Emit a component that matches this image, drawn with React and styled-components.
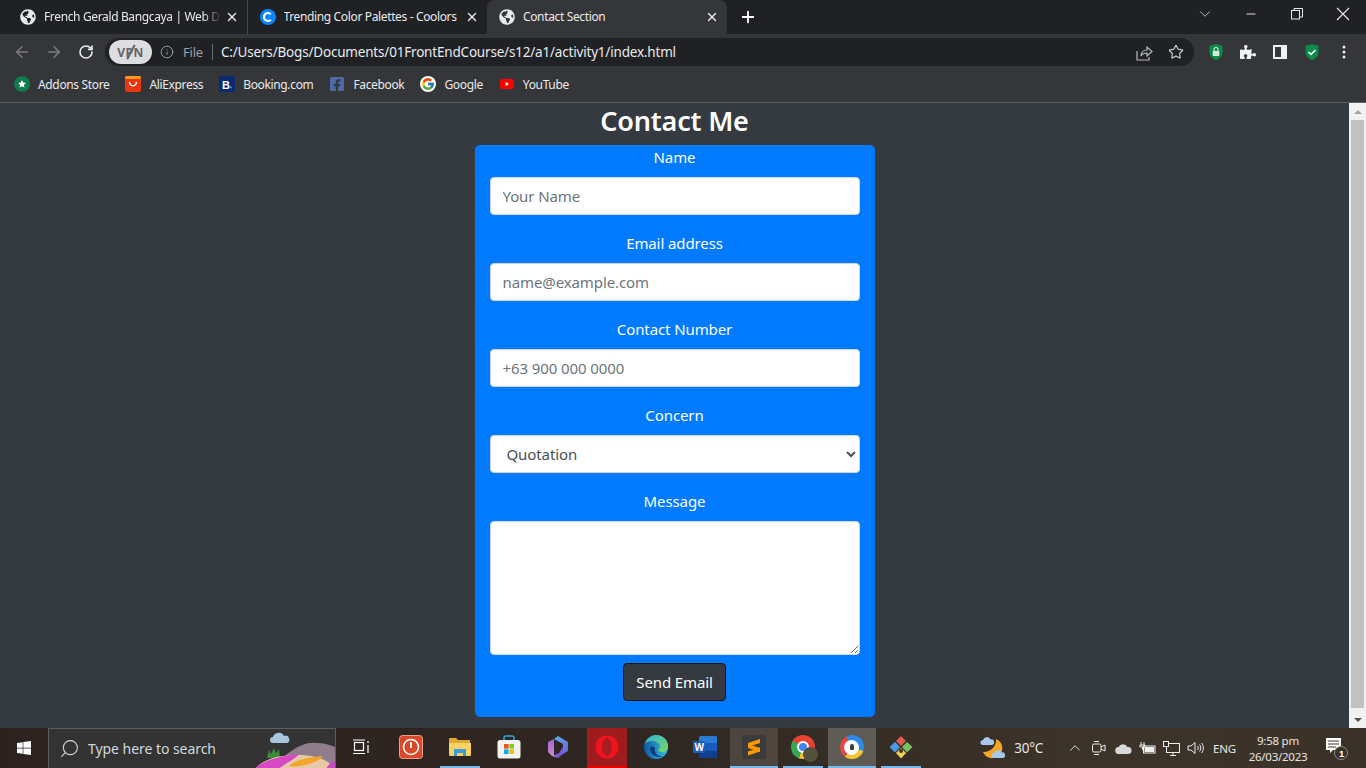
import React from "react";
import styled, { createGlobalStyle } from "styled-components";
import { FaGlobeAmericas, FaFacebookSquare, FaWindows, FaPuzzlePiece } from "react-icons/fa";
import { FcGoogle } from "react-icons/fc";
import {
  ArrowLeft,
  ArrowRight,
  RotateCw,
  Info,
  Star,
  X,
  Plus,
  ChevronDown,
  ChevronUp,
  Minus,
  Search,
} from "lucide-react";

const uiFont = `"Noto Sans", "Open Sans", "Liberation Sans", sans-serif`;

const GlobalStyle = createGlobalStyle`
  html, body {
    margin: 0;
    padding: 0;
    height: 100%;
    overflow: hidden;
    font-family: ${uiFont};
  }
  * {
    box-sizing: border-box;
  }
`;

const Screen = styled.div`
  width: 1366px;
  height: 768px;
  display: flex;
  flex-direction: column;
  background: #343a40;
`;

/* ---------- tabs ---------- */
const TabStrip = styled.div`
  height: 34px;
  flex: none;
  display: flex;
  align-items: flex-end;
  padding-left: 8px;
  background: #202124;
`;

const Tab = styled.div`
  position: relative;
  width: ${(p) => (p.$active ? "240px" : "239.5px")};
  height: 34px;
  flex: none;
  display: flex;
  align-items: center;
  padding: 0 8px 0 12px;
  gap: 8px;
  color: #e8eaed;
  background: ${(p) => (p.$active ? "#35363a" : "transparent")};
  border-radius: ${(p) => (p.$active ? "8px 8px 0 0" : "0")};
  border-right: ${(p) => (p.$divider ? "1px solid #4a4b4f" : "none")};
  background-clip: ${(p) => (p.$divider ? "padding-box" : "border-box")};
`;

const TabTitle = styled.span`
  flex: 1;
  min-width: 0;
  overflow: hidden;
  white-space: nowrap;
  font-size: 12px;
  letter-spacing: -0.36px;
  padding-bottom: 1px;
  mask-image: ${(p) => (p.$fade ? "linear-gradient(90deg, #000 90%, transparent)" : "none")};
`;

const TabClose = styled(X)`
  flex: none;
  width: 14px;
  height: 14px;
  margin-left: -4px;
  stroke-width: 2.4;
  color: #e8eaed;
`;

const NewTab = styled(Plus)`
  width: 18px;
  height: 18px;
  margin: 0 0 8px 12px;
  stroke-width: 2.4;
  color: #fff;
`;

const WindowButtons = styled.div`
  margin-left: auto;
  height: 28px;
  align-self: flex-start;
  display: flex;
`;

const WindowButton = styled.div`
  width: 46px;
  height: 28px;
  display: flex;
  align-items: center;
  justify-content: center;
  color: #e8eaed;
`;

/* ---------- toolbar ---------- */
const Toolbar = styled.div`
  height: 34px;
  flex: none;
  display: flex;
  align-items: center;
  padding: 2px 6px 0 6px;
  background: #35363a;
`;

const NavButton = styled.div`
  width: 32px;
  height: 28px;
  flex: none;
  display: flex;
  align-items: center;
  justify-content: center;
  color: ${(p) => (p.$dim ? "#7b7d81" : "#e8eaed")};
`;

const AddressBar = styled.div`
  width: 1089px;
  height: 28px;
  flex: none;
  margin-left: 3px;
  display: flex;
  align-items: center;
  padding: 0 2px 0 4px;
  border-radius: 14px;
  background: #202124;
`;

const VpnPill = styled.div`
  width: 43px;
  height: 24px;
  flex: none;
  display: flex;
  align-items: center;
  justify-content: center;
  border-radius: 12px;
  background: #dcdde0;
  color: #63656a;
  font-size: 12px;
  font-weight: 700;
  letter-spacing: 0.5px;
  position: relative;
  &::after {
    content: "";
    position: absolute;
    left: 21px;
    top: 4px;
    width: 1.5px;
    height: 16px;
    background: #63656a;
    transform: rotate(28deg);
  }
`;

const SecurityInfo = styled.div`
  display: flex;
  align-items: center;
  margin-left: 8px;
  color: #9aa0a6;
  font-size: 13px;
  letter-spacing: -0.2px;
  gap: 9px;
`;

const Divider = styled.span`
  width: 1px;
  height: 16px;
  margin: 0 8px 0 0;
  background: #6a6b6f;
`;

const UrlText = styled.span`
  flex: 1;
  color: #e8eaed;
  font-size: 13.5px;
  letter-spacing: -0.19px;
  white-space: nowrap;
`;

const OmniIcon = styled.div`
  width: 32px;
  height: 24px;
  flex: none;
  display: flex;
  align-items: center;
  justify-content: center;
  color: #c4c7c5;
`;

const ExtensionGroup = styled.div`
  margin-left: 6px;
  display: flex;
`;

/* ---------- bookmarks ---------- */
const BookmarkBar = styled.div`
  height: 35px;
  flex: none;
  display: flex;
  align-items: center;
  padding: 0 0 2px 14px;
  gap: 16px;
  background: #35363a;
  border-bottom: 1px solid #5f6063;
`;

const Bookmark = styled.div`
  display: flex;
  align-items: center;
  gap: 8px;
  color: #e8eaed;
  font-size: 12px;
  letter-spacing: -0.35px;
  white-space: nowrap;
`;

const IconCircle = styled.span`
  width: 16px;
  height: 16px;
  flex: none;
  display: flex;
  align-items: center;
  justify-content: center;
  border-radius: 50%;
  background: #fff;
`;

/* ---------- page ---------- */
const Viewport = styled.div`
  flex: 1;
  min-height: 0;
  display: flex;
`;

const PageBody = styled.main`
  flex: 1;
  display: flex;
  flex-direction: column;
  align-items: center;
  background: #343a40;
  color: #fff;
`;

const Heading = styled.h2`
  margin: 0;
  height: 42px;
  font-size: 27px;
  line-height: 36px;
  font-weight: 600;
  letter-spacing: -0.2px;
`;

const ContactForm = styled.form`
  width: 400px;
  height: 572px;
  display: flex;
  flex-direction: column;
  align-items: center;
  padding: 0 15px 16px;
  border-radius: 5px;
  background: #007bff;
`;

const FieldLabel = styled.label`
  display: block;
  height: 24px;
  margin-bottom: 8px;
  font-size: 15px;
  line-height: 24px;
  letter-spacing: -0.1px;
  color: #fff;
  text-align: center;
`;

const fieldStyles = `
  display: block;
  width: 370px;
  border: 1px solid #ced4da;
  border-radius: 4px;
  background: #fff;
  color: #495057;
  font-family: ${uiFont};
  font-size: 15px;
  letter-spacing: -0.1px;
  outline: none;
`;

const TextField = styled.input`
  ${fieldStyles}
  height: 38px;
  margin-bottom: 16px;
  padding: 6px 12px;
  &::placeholder {
    color: #6c757d;
    opacity: 1;
  }
`;

const SelectField = styled.select`
  ${fieldStyles}
  height: 38px;
  margin-bottom: 16px;
  padding: 6px 8px 6px 12px;
`;

const MessageField = styled.textarea`
  ${fieldStyles}
  height: 134px;
  margin-bottom: 8px;
  padding: 6px 12px;
  resize: vertical;
`;

const SendButton = styled.button`
  width: 103px;
  height: 38px;
  padding: 0;
  border: 1px solid #111418;
  border-radius: 4px;
  background: #343a40;
  color: #fff;
  font-family: ${uiFont};
  font-size: 15px;
  letter-spacing: -0.12px;
`;

const Scrollbar = styled.div`
  width: 17px;
  flex: none;
  display: flex;
  flex-direction: column;
  background: #f1f1f1;
`;

const ScrollArrow = styled.div`
  height: 17px;
  flex: none;
  display: flex;
  align-items: center;
  justify-content: center;
  &::before {
    content: "";
    border-left: 4px solid transparent;
    border-right: 4px solid transparent;
    ${(p) => (p.$down ? "border-top: 4px solid #505050;" : "border-bottom: 4px solid #a3a3a3;")}
  }
`;

const ScrollThumb = styled.div`
  flex: 1;
  margin: 0 2px 3px;
  background: #c1c1c1;
`;

/* ---------- taskbar ---------- */
const Taskbar = styled.footer`
  height: 40px;
  flex: none;
  display: flex;
  align-items: stretch;
  color: #fff;
  background: linear-gradient(90deg, #2c2320 0%, #2f2622 45%, #3c3429 80%, #3a3229 100%);
`;

const StartButton = styled.div`
  width: 48px;
  flex: none;
  display: flex;
  align-items: center;
  justify-content: center;
  color: #fff;
`;

const SearchBox = styled.div`
  position: relative;
  width: 288px;
  flex: none;
  display: flex;
  align-items: center;
  gap: 8px;
  padding-left: 10px;
  overflow: hidden;
  background: #333;
  border: 1px solid #5e5e5e;
  border-bottom: none;
  color: #d0d8dc;
  font-size: 14px;
  letter-spacing: -0.05px;
`;

const SearchGlass = styled(Search)`
  width: 21px;
  height: 21px;
  stroke-width: 1.2;
  transform: scaleX(-1);
`;

const SearchArt = styled.svg`
  position: absolute;
  right: 0;
  top: 0;
  width: 82px;
  height: 40px;
`;

const TaskItems = styled.div`
  display: flex;
`;

const TaskCell = styled.div`
  width: ${(p) => p.$width || 49}px;
  flex: none;
  display: flex;
  justify-content: center;
`;

const TaskTile = styled.div`
  width: ${(p) => (p.$wide ? 48 : 40)}px;
  height: 40px;
  display: flex;
  align-items: center;
  justify-content: center;
  background: ${(p) => p.$bg || "transparent"};
  border-bottom: 2px solid ${(p) => p.$line || "transparent"};
`;

const ChromeBall = styled.div`
  position: relative;
  width: 24px;
  height: 24px;
  border-radius: 50%;
  background: conic-gradient(#ea4335 0 100deg, #fbc02d 100deg 200deg, #34a853 200deg 300deg, #ea4335 300deg);
  &::before {
    content: "";
    position: absolute;
    inset: 6px;
    border-radius: 50%;
    background: #4285f4;
    border: 2px solid #fff;
  }
  &::after {
    content: "";
    position: absolute;
    right: -3px;
    bottom: -3px;
    width: 15px;
    height: 15px;
    border-radius: 50%;
    background: #54513c;
  }
`;

const SecureBall = styled.div`
  width: 24px;
  height: 24px;
  border-radius: 50%;
  display: flex;
  align-items: center;
  justify-content: center;
  background: conic-gradient(#2f8be8 0 110deg, #f7c531 110deg 215deg, #e5483e 215deg 330deg, #2f8be8 330deg);
`;

const SecureCore = styled.div`
  width: 15px;
  height: 15px;
  border-radius: 50%;
  display: flex;
  align-items: center;
  justify-content: center;
  background: #fff;
  &::after {
    content: "";
    width: 4px;
    height: 6px;
    border-radius: 2px 2px 1px 1px;
    background: #3b3b3b;
  }
`;

const Tray = styled.div`
  margin-left: auto;
  display: flex;
  align-items: center;
  font-size: 12px;
  color: #e8e6e3;
`;

const Weather = styled.div`
  display: flex;
  align-items: center;
  gap: 8px;
  margin-right: 20px;
  font-size: 13.5px;
  letter-spacing: -0.2px;
`;

const TrayIcon = styled.div`
  width: 24px;
  height: 40px;
  flex: none;
  display: flex;
  align-items: center;
  justify-content: center;
  color: #eee;
`;

const Lang = styled.span`
  margin: 0 0 0 6px;
  font-size: 11.5px;
  letter-spacing: -0.2px;
`;

const Clock = styled.div`
  width: 60px;
  margin-left: 12px;
  padding-top: 2px;
  text-align: center;
  font-size: 11.5px;
  line-height: 16px;
  letter-spacing: -0.25px;
  white-space: nowrap;
`;

const NotifyBox = styled.div`
  width: 58px;
  display: flex;
  align-items: center;
  justify-content: center;
`;

/* ---------- drawn icons ---------- */
const CoolorsIcon = () => (
  <svg width="16" height="16" viewBox="0 0 16 16">
    <circle cx="8" cy="8" r="8" fill="#0a84ff" />
    <path d="M10.8 5.2a4 4 0 1 0 0 5.600" fill="none" stroke="#fff" strokeWidth="2.2" />
  </svg>
);

const RestoreIcon = () => (
  <svg width="12" height="12" viewBox="0 0 12 12" fill="none" stroke="currentColor">
    <rect x="0.5" y="2.5" width="8" height="8.5" />
    <path d="M3 2.5V.5h8.5V9H8.5" />
  </svg>
);

const CloseLine = () => (
  <svg width="14" height="14" viewBox="0 0 14 14" stroke="currentColor" strokeWidth="1.1">
    <path d="M1 1l12 12M13 1L1 13" />
  </svg>
);

const ShareIcon = () => (
  <svg width="17" height="17" viewBox="0 0 17 17" fill="none" stroke="#b8babd" strokeWidth="1.2">
    <path d="M1 7v9h12v-3" />
    <path d="M5 12c0-4 3-6 6-6V3l5 4.5-5 4.5V9c-3 0-5 1-6 3z" />
  </svg>
);

const ShieldLock = () => (
  <svg width="16" height="16" viewBox="0 0 16 16">
    <path d="M8 0l6.500 1.800V8c0 4-3 6.500-6.500 8-3.500-1.500-6.500-4-6.500-8V1.800z" fill="#0c8a4a" />
    <rect x="4.700" y="7" width="6.600" height="5" rx="1" fill="#d6e9dd" />
    <path d="M6 7V5.500a2 2 0 0 1 4 0V7" fill="none" stroke="#d6e9dd" strokeWidth="1.200" />
  </svg>
);

const ShieldCheck = () => (
  <svg width="16" height="16" viewBox="0 0 16 16">
    <path d="M8 0l6.500 1.800V8c0 4-3 6.500-6.500 8-3.500-1.500-6.500-4-6.500-8V1.800z" fill="#0c8a4a" />
    <path d="M4.500 8l2.500 2.300L11.500 6" fill="none" stroke="#fff" strokeWidth="1.600" />
  </svg>
);

const SidePanelIcon = () => (
  <svg width="14" height="14" viewBox="0 0 14 14">
    <rect width="14" height="14" fill="#f1f3f4" />
    <rect x="2" y="2" width="6" height="10" fill="#35363a" />
  </svg>
);

const MenuDots = () => (
  <svg width="4" height="14" viewBox="0 0 4 14" fill="#e8eaed">
    <circle cx="2" cy="2" r="1.500" />
    <circle cx="2" cy="7" r="1.500" />
    <circle cx="2" cy="12" r="1.500" />
  </svg>
);

const AddonsIcon = () => (
  <svg width="16" height="16" viewBox="0 0 16 16">
    <circle cx="8" cy="8" r="8" fill="#0e7c4a" />
    <path d="M8 4l1.200 2.600 2.800.3-2.100 1.900.6 2.800L8 10.200l-2.500 1.400.6-2.800L4 6.900l2.800-.3z" fill="#fff" />
  </svg>
);

const AliIcon = () => (
  <svg width="16" height="16" viewBox="0 0 16 16">
    <rect width="16" height="16" rx="2" fill="#e8360e" />
    <rect width="16" height="3" rx="1.500" fill="#f79a1e" />
    <path d="M4.500 6c.4 5 6.600 5 7 0" fill="none" stroke="#fff" strokeWidth="1.400" />
  </svg>
);

const BookingIcon = () => (
  <svg width="16" height="16" viewBox="0 0 16 16">
    <rect width="16" height="16" rx="2" fill="#0b2a6f" />
    <text x="3" y="12.500" fontSize="11" fontWeight="700" fill="#fff" fontFamily="Liberation Sans, sans-serif">B</text>
    <circle cx="12" cy="11.500" r="1" fill="#36a3e0" />
  </svg>
);

const YoutubeIcon = () => (
  <svg width="16" height="10" viewBox="0 0 16 10">
    <rect x="1" width="14" height="10" rx="2.500" fill="#f00" />
    <path d="M6.700 3l3.300 2-3.300 2z" fill="#fff" />
  </svg>
);

const TaskViewIcon = () => (
  <svg width="18" height="16" viewBox="0 0 18 16" fill="none" stroke="#fff" strokeWidth="1.200">
    <rect x="2.500" y="3.500" width="9" height="8" />
    <path d="M1 1h12M1 14.500h12M16 2v2M16 6v8" />
  </svg>
);

const PowerAppIcon = () => (
  <svg width="24" height="24" viewBox="0 0 24 24">
    <rect x="0.500" y="0.500" width="23" height="23" rx="3" fill="#d9482b" stroke="#e8a08c" />
    <circle cx="12" cy="12" r="7.500" fill="none" stroke="#fff" strokeWidth="1.600" />
    <path d="M12 7v6" stroke="#fff" strokeWidth="1.800" />
  </svg>
);

const ExplorerIcon = () => (
  <svg width="22" height="20" viewBox="0 0 22 20">
    <path d="M0 2a1 1 0 0 1 1-1h6l2 2h12v15H0z" fill="#e2aa33" />
    <path d="M0 6h22v12a1 1 0 0 1-1 1H1a1 1 0 0 1-1-1z" fill="#fbd363" />
    <path d="M5 12h12v7h-3v-3H8v3H5z" fill="#3a9be0" />
  </svg>
);

const StoreIcon = () => (
  <svg width="24" height="24" viewBox="0 0 24 24">
    <path d="M7 6V3a2 2 0 0 1 2-2h6a2 2 0 0 1 2 2v3" fill="none" stroke="#29a5df" strokeWidth="1.600" />
    <rect x="0.500" y="5" width="23" height="18.500" rx="2.500" fill="#f4f2f0" />
    <rect x="7" y="9" width="4.600" height="4.600" fill="#f1511b" />
    <rect x="12.400" y="9" width="4.600" height="4.600" fill="#80cc28" />
    <rect x="7" y="14.400" width="4.600" height="4.600" fill="#00adef" />
    <rect x="12.400" y="14.400" width="4.600" height="4.600" fill="#fbbc09" />
  </svg>
);

const CopilotIcon = () => (
  <svg width="22" height="24" viewBox="0 0 22 24">
    <defs>
      <linearGradient id="cpA" x1="0" y1="0" x2="1" y2="1">
        <stop offset="0" stopColor="#5fb4ec" />
        <stop offset="1" stopColor="#6a5fd8" />
      </linearGradient>
      <linearGradient id="cpB" x1="0" y1="0" x2="0" y2="1">
        <stop offset="0" stopColor="#9a6ad8" />
        <stop offset="1" stopColor="#d68ad0" />
      </linearGradient>
    </defs>
    <path d="M11 1l10 6v9l-5 3V9L7 4z" fill="url(#cpA)" />
    <path d="M1 7l6-3 0 16 4 3-6-2-4-4z" fill="url(#cpB)" />
    <path d="M16 12v7l-5 4-4-3 5-2z" fill="#7a58d8" />
  </svg>
);

const OperaIcon = () => (
  <svg width="24" height="24" viewBox="0 0 24 24">
    <circle cx="12" cy="12" r="11.500" fill="#f0141f" />
    <ellipse cx="12" cy="12" rx="5" ry="9" fill="#a81d22" />
  </svg>
);

const EdgeIcon = () => (
  <svg width="24" height="24" viewBox="0 0 24 24">
    <defs>
      <linearGradient id="edA" x1="0" y1="0" x2="1" y2="0">
        <stop offset="0" stopColor="#0c59a4" />
        <stop offset="1" stopColor="#36c0e0" />
      </linearGradient>
      <linearGradient id="edB" x1="0" y1="0" x2="1" y2="1">
        <stop offset="0" stopColor="#2fb4d8" />
        <stop offset="1" stopColor="#7ad860" />
      </linearGradient>
    </defs>
    <circle cx="12" cy="12" r="12" fill="url(#edA)" />
    <path d="M1 9C3 2 9 0 12 0c7 0 12 5 12 11 0 4-3 6-6 6-2 0-4-1-4-2 2-1 3-3 1-6C12 5 4 5 1 9z" fill="url(#edB)" />
    <path d="M6 13c0 5 4 9 9 9 1 0 2 0 3-1-6 1-8-5-7-8-1-2-4-2-5 0z" fill="#0a3d7a" />
  </svg>
);

const WordIcon = () => (
  <svg width="24" height="22" viewBox="0 0 24 22">
    <rect x="6" y="0" width="18" height="22" rx="1.500" fill="#2b7cd3" />
    <rect x="6" y="7" width="18" height="7.500" fill="#185abd" />
    <rect x="6" y="14.500" width="18" height="7.500" rx="1" fill="#103f91" />
    <rect x="0" y="5" width="12" height="12" rx="1" fill="#1a5cbe" />
    <text x="1.500" y="14.500" fontSize="10" fontWeight="700" fill="#fff" fontFamily="Liberation Sans, sans-serif">W</text>
  </svg>
);

const SublimeIcon = () => (
  <svg width="24" height="24" viewBox="0 0 24 24">
    <rect width="24" height="24" rx="2" fill="#3b3b3c" />
    <path d="M18 4v4L6 12V8zM6 9l12 4v4L6 13zM18 12.500v4l-12 4v-4z" fill="#ff9800" />
  </svg>
);

const GitKrakenIcon = () => (
  <svg width="24" height="24" viewBox="0 0 24 24">
    <path d="M12 1l5 5-5 5-5-5z" fill="#e05a52" />
    <path d="M18 7l5.500 5-5.500 5.500-5-5.500z" fill="#7cc160" />
    <path d="M6 7l5 5-5 5.500L.500 12z" fill="#4c9be8" />
    <path d="M12 13l5 5-5 5.500L7 18z" fill="#f0d255" />
    <circle cx="12" cy="16" r="2" fill="#3a3229" />
  </svg>
);

const WeatherIcon = () => (
  <svg width="26" height="24" viewBox="0 0 26 24">
    <path d="M16 3a10 10 0 1 1-13 13c6 1 14-5 13-13z" fill="#f5a623" />
    <path d="M3 9a2.500 2.500 0 0 1 0-5 4 4 0 0 1 7.500-.5A2.800 2.800 0 0 1 12 9z" fill="#a8c8ee" />
    <path d="M14 22a2.500 2.500 0 0 1 0-5 4 4 0 0 1 7.500-.5A2.800 2.800 0 0 1 23 22z" fill="#a8c8ee" />
  </svg>
);

const MeetIcon = () => (
  <svg width="16" height="16" viewBox="0 0 16 16" fill="none" stroke="#eee" strokeWidth="1">
    <rect x="1.500" y="4" width="8.500" height="8" rx="1.500" />
    <path d="M10 7l4-2v6l-4-2M3 1.500h5M3 14.500h5" />
  </svg>
);

const CloudIcon = () => (
  <svg width="17" height="11" viewBox="0 0 17 11" fill="#d9d9d9">
    <path d="M4 11a3.500 3.500 0 0 1-.5-7A5 5 0 0 1 12.500 4 3.500 3.500 0 0 1 13.500 11z" />
  </svg>
);

const BatteryIcon = () => (
  <svg width="17" height="14" viewBox="0 0 17 14" fill="none" stroke="#eee" strokeWidth="1">
    <rect x="4.500" y="5" width="11.500" height="7" />
    <rect x="6" y="6.500" width="8.500" height="4" fill="#eee" />
    <path d="M2 1v3M5 1v3M1 4h5v2H1zM3.500 6v3" />
  </svg>
);

const NetworkIcon = () => (
  <svg width="17" height="15" viewBox="0 0 17 15" fill="none" stroke="#eee" strokeWidth="1">
    <rect x="3.500" y="2.500" width="13" height="9" />
    <path d="M7 14.500h6M10 11.500v3" />
    <rect x="0.500" y="0.500" width="5" height="5" fill="#3a3229" />
  </svg>
);

const VolumeIcon = () => (
  <svg width="17" height="14" viewBox="0 0 17 14" fill="none" stroke="#eee" strokeWidth="1">
    <path d="M1 5h3l4-3.500v11L4 9H1zM10.500 5c1 1 1 3 0 4M12.500 3.500c1.700 2 1.700 5 0 7M14.500 2c2.500 3 2.500 7 0 10" />
  </svg>
);

const NotifyIcon = () => (
  <svg width="24" height="24" viewBox="0 0 24 24">
    <path d="M1 2h15v12H8l-3 3v-3H1z" fill="#fff" />
    <path d="M3 5h11M3 8h11M3 11h8" stroke="#3a3229" strokeWidth="1" />
    <circle cx="16" cy="17" r="6.500" fill="#3a3229" stroke="#8a8a8a" />
    <text x="14" y="20.500" fontSize="9.500" fontWeight="700" fill="#fff" fontFamily="Liberation Sans, sans-serif">1</text>
  </svg>
);

const fields = [
  { label: "Name", placeholder: "Your Name", type: "text" },
  { label: "Email address", placeholder: "name@example.com", type: "email" },
  { label: "Contact Number", placeholder: "+63 900 000 0000", type: "tel" },
];

const bookmarks = [
  { name: "Addons Store", icon: <AddonsIcon /> },
  { name: "AliExpress", icon: <AliIcon /> },
  { name: "Booking.com", icon: <BookingIcon /> },
  { name: "Facebook", icon: <FaFacebookSquare size={16} color="#4a6aa8" /> },
  {
    name: "Google",
    icon: (
      <IconCircle>
        <FcGoogle size={14} />
      </IconCircle>
    ),
  },
  { name: "YouTube", icon: <YoutubeIcon /> },
];

const taskApps = [
  { icon: <ExplorerIcon />, line: "#76b9ed" },
  { icon: <StoreIcon /> },
  { icon: <CopilotIcon /> },
  { icon: <OperaIcon />, bg: "#9e1c1c", line: "#f00000" },
  { icon: <EdgeIcon /> },
  { icon: <WordIcon /> },
  { icon: <SublimeIcon />, bg: "#4d453e", line: "#76b9ed", wide: true },
  { icon: <ChromeBall />, line: "#76b9ed" },
  {
    icon: (
      <SecureBall>
        <SecureCore />
      </SecureBall>
    ),
    bg: "#5f5c56",
    line: "#76b9ed",
    wide: true,
  },
  { icon: <GitKrakenIcon />, line: "#76b9ed" },
];

function App() {
  return (
    <Screen>
      <GlobalStyle />
      <TabStrip>
        <Tab $divider>
          <FaGlobeAmericas size={16} color="#e8eaed" />
          <TabTitle $fade>French Gerald Bangcaya | Web D</TabTitle>
          <TabClose />
        </Tab>
        <Tab>
          <CoolorsIcon />
          <TabTitle>Trending Color Palettes - Coolors</TabTitle>
          <TabClose />
        </Tab>
        <Tab $active>
          <FaGlobeAmericas size={16} color="#e8eaed" />
          <TabTitle>Contact Section</TabTitle>
          <TabClose />
        </Tab>
        <NewTab />
        <WindowButtons>
          <WindowButton>
            <ChevronDown size={18} strokeWidth={1} />
          </WindowButton>
          <WindowButton>
            <Minus size={14} strokeWidth={1.6} />
          </WindowButton>
          <WindowButton>
            <RestoreIcon />
          </WindowButton>
          <WindowButton>
            <CloseLine />
          </WindowButton>
        </WindowButtons>
      </TabStrip>

      <Toolbar>
        <NavButton $dim>
          <ArrowLeft size={18} strokeWidth={2} />
        </NavButton>
        <NavButton $dim>
          <ArrowRight size={18} strokeWidth={2} />
        </NavButton>
        <NavButton>
          <RotateCw size={16} strokeWidth={2.4} />
        </NavButton>
        <AddressBar>
          <VpnPill>VPN</VpnPill>
          <SecurityInfo>
            <Info size={14} strokeWidth={1.6} />
            <span>File</span>
            <Divider />
          </SecurityInfo>
          <UrlText>C:/Users/Bogs/Documents/01FrontEndCourse/s12/a1/activity1/index.html</UrlText>
          <OmniIcon>
            <ShareIcon />
          </OmniIcon>
          <OmniIcon>
            <Star size={16} strokeWidth={1.8} />
          </OmniIcon>
        </AddressBar>
        <ExtensionGroup>
          <NavButton>
            <ShieldLock />
          </NavButton>
          <NavButton>
            <FaPuzzlePiece size={16} color="#f1f3f4" />
          </NavButton>
          <NavButton>
            <SidePanelIcon />
          </NavButton>
          <NavButton>
            <ShieldCheck />
          </NavButton>
          <NavButton>
            <MenuDots />
          </NavButton>
        </ExtensionGroup>
      </Toolbar>

      <BookmarkBar>
        {bookmarks.map((b) => (
          <Bookmark key={b.name}>
            {b.icon}
            {b.name}
          </Bookmark>
        ))}
      </BookmarkBar>

      <Viewport>
        <PageBody>
          <Heading>Contact Me</Heading>
          <ContactForm>
            {fields.map((f) => (
              <React.Fragment key={f.label}>
                <FieldLabel>{f.label}</FieldLabel>
                <TextField type={f.type} placeholder={f.placeholder} />
              </React.Fragment>
            ))}
            <FieldLabel>Concern</FieldLabel>
            <SelectField defaultValue="Quotation">
              <option>Quotation</option>
            </SelectField>
            <FieldLabel>Message</FieldLabel>
            <MessageField />
            <SendButton type="button">Send Email</SendButton>
          </ContactForm>
        </PageBody>
        <Scrollbar>
          <ScrollArrow />
          <ScrollThumb />
          <ScrollArrow $down />
        </Scrollbar>
      </Viewport>

      <Taskbar>
        <StartButton>
          <FaWindows size={16} />
        </StartButton>
        <SearchBox>
          <SearchGlass />
          <span>Type here to search</span>
          <SearchArt viewBox="0 0 82 40">
            <path d="M20 14a3 3 0 0 1 0-6 6 6 0 0 1 11-1 3.500 3.500 0 0 1 3 7z" fill="#a8c6dc" />
            <path d="M33 26c10-8 20-13 30-12 8 0 14 2 19 4v22H33z" fill="#8f7d8c" />
            <path d="M14 29l2-8 2 4 3-6 2 5 3-4 1 9z" fill="#3c8b3c" />
            <path d="M2 40c8-10 24-14 42-14 16 0 30 3 38 14z" fill="#e7c9a8" />
            <path d="M2 40c6-8 24-13 44-15-4 6-16 10-20 15z" fill="#d648c4" />
            <path d="M36 37c6-6 20-9 34-10-4 6-22 12-34 10z" fill="#f2a42b" />
            <path d="M73 40c2-4 5-7 9-8v8z" fill="#c84ac0" />
          </SearchArt>
        </SearchBox>
        <TaskCell $width={50}>
          <TaskTile>
            <TaskViewIcon />
          </TaskTile>
        </TaskCell>
        <TaskCell $width={49}>
          <TaskTile>
            <PowerAppIcon />
          </TaskTile>
        </TaskCell>
        <TaskItems>
          {taskApps.map((app, i) => (
            <TaskCell key={i}>
              <TaskTile $bg={app.bg} $line={app.line} $wide={app.wide}>
                {app.icon}
              </TaskTile>
            </TaskCell>
          ))}
        </TaskItems>
        <Tray>
          <Weather>
            <WeatherIcon />
            <span>30°C</span>
          </Weather>
          <TrayIcon>
            <ChevronUp size={18} strokeWidth={1.2} />
          </TrayIcon>
          <TrayIcon>
            <MeetIcon />
          </TrayIcon>
          <TrayIcon>
            <CloudIcon />
          </TrayIcon>
          <TrayIcon>
            <BatteryIcon />
          </TrayIcon>
          <TrayIcon>
            <NetworkIcon />
          </TrayIcon>
          <TrayIcon>
            <VolumeIcon />
          </TrayIcon>
          <Lang>ENG</Lang>
          <Clock>
            9:58 pm
            <br />
            26/03/2023
          </Clock>
          <NotifyBox>
            <NotifyIcon />
          </NotifyBox>
        </Tray>
      </Taskbar>
    </Screen>
  );
}

export default App;
